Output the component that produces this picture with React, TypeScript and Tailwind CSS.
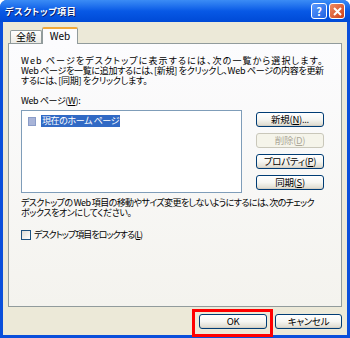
const font = {
  fontFamily: '"Noto Sans CJK JP", "Noto Sans", sans-serif',
  fontFeatureSettings: '"palt"',
};

function XpButton({
  children,
  disabled,
  className = "",
}: {
  children: React.ReactNode;
  disabled?: boolean;
  className?: string;
}) {
  return (
    <div
      className={
        "flex h-[15px] items-center justify-center rounded-[3px] border text-[9.5px] leading-none " +
        (disabled
          ? "border-[#c9c7ba] bg-[#f5f4ea] text-[#aca899] "
          : "border-[#003c74] bg-gradient-to-b from-white via-[#f6f6f2] to-[#dcd9cc] text-black shadow-[inset_0_-1px_0_#d6d0c5] ") +
        className
      }
    >
      {children}
    </div>
  );
}

function U({ children }: { children: React.ReactNode }) {
  return <span className="underline underline-offset-1">{children}</span>;
}

export default function App() {
  return (
    <div
      className="flex h-[338px] w-[350px] flex-col overflow-hidden rounded-t-[7px] bg-[#0a4fdb]"
      style={font}
    >
      {/* title bar */}
      <div className="flex h-[22px] shrink-0 items-center bg-gradient-to-b from-[#3b8cf5] via-[#0859e6] to-[#0049d6] pl-[5px] pr-[5px]">
        <span className="text-[9px] font-bold leading-none tracking-[0.6px] text-white [text-shadow:1px_1px_0_#0a1e6a]">
          デスクトップ項目
        </span>
        <div className="ml-auto flex gap-[2px]">
          <div className="flex h-[16px] w-[16px] items-center justify-center rounded-[3px] border border-white bg-gradient-to-br from-[#5b9bff] to-[#1e5fe0] text-[11px] font-bold leading-none text-white">
            ?
          </div>
          <div className="flex h-[16px] w-[16px] items-center justify-center rounded-[3px] border border-white bg-gradient-to-br from-[#f08a62] to-[#cc3d13]">
            <svg width="9" height="9" viewBox="0 0 9 9">
              <path d="M1 1 L8 8 M8 1 L1 8" stroke="white" strokeWidth="2" />
            </svg>
          </div>
        </div>
      </div>

      {/* body */}
      <div className="relative mx-[3px] mb-[3px] flex flex-1 flex-col bg-[#ece9d8] px-[5px]">
        {/* tabs */}
        <div className="flex h-[21px] items-end pl-[2px]">
          <div className="flex h-[13px] w-[32px] items-center justify-center rounded-t-[2px] border border-b-0 border-[#919b9c] bg-gradient-to-b from-white to-[#ecebe5] text-[10px] leading-none">
            全般
          </div>
          <div className="relative z-10 -mb-px flex h-[17px] w-[36px] items-center justify-center rounded-t-[2px] border-x border-[#919b9c] border-t-[2px] border-t-[#f2a93a] bg-[#fcfcfe] pb-[1px] text-[10px] leading-none">
            Web
          </div>
        </div>

        {/* panel */}
        <div className="flex h-[264px] flex-col border border-[#919b9c] bg-gradient-to-b from-[#fcfcfe] to-[#f4f3ee] pl-[12px] pr-[12px] text-[9px] leading-[10px] text-black">
          <div className="mt-[12px] whitespace-nowrap">
            <div className="tracking-[1.1px]">
              Web ページをデスクトップに表示するには、次の一覧から選択します。
            </div>
            <div className="tracking-[-0.3px]">
              Web ページを一覧に追加するには、[新規] をクリックし、Web ページの内容を更新
            </div>
            <div className="tracking-[-0.25px]">するには、[同期] をクリックします。</div>
          </div>

          <div className="mt-[10px] tracking-[-0.4px]">
            Web ページ(<U>W</U>):
          </div>

          <div className="mt-[4px] flex">
            <div className="h-[83px] w-[221px] border border-[#7f9db9] bg-white pl-[6px] pt-[4px]">
              <div className="flex items-center">
                <div className="h-[9px] w-[8px] border border-[#8a9cc8] bg-[#a8b4d8]" />
                <div className="ml-[5px] flex h-[12px] items-center bg-[#316ac5] px-[1px] tracking-[-0.4px] text-white">
                  現在のホーム ページ
                </div>
              </div>
            </div>
            <div className="ml-[14px] mt-[2px] flex w-[68px] flex-col gap-[6px] tracking-[-0.3px]">
              <XpButton>
                新規(<U>N</U>)...
              </XpButton>
              <XpButton disabled>
                削除(<U>D</U>)
              </XpButton>
              <XpButton>
                プロパティ(<U>P</U>)
              </XpButton>
              <XpButton>
                同期(<U>S</U>)
              </XpButton>
            </div>
          </div>

          <div className="mt-[5px] whitespace-nowrap">
            <div className="tracking-[-0.6px]">
              デスクトップの Web 項目の移動やサイズ変更をしないようにするには、次のチェック
            </div>
            <div className="tracking-[-0.4px]">ボックスをオンにしてください。</div>
          </div>

          <label className="mt-[12px] flex items-center">
            <span className="h-[10px] w-[10px] border border-[#1c5180] bg-gradient-to-br from-[#dcdcd7] to-white" />
            <span className="ml-[3px] tracking-[-0.95px]">
              デスクトップ項目をロックする(<U>L</U>)
            </span>
          </label>
        </div>

        {/* bottom buttons */}
        <div className="mt-[7px] flex justify-end gap-[8px] tracking-[-0.3px]">
          <div className="relative">
            <XpButton className="h-[14px] w-[68px]">OK</XpButton>
            <div className="pointer-events-none absolute -bottom-[8px] -left-[7px] -right-[6px] -top-[5px] border-[3px] border-[#ff0000]" />
          </div>
          <XpButton className="h-[14px] w-[67px]">キャンセル</XpButton>
        </div>
      </div>
    </div>
  );
}
